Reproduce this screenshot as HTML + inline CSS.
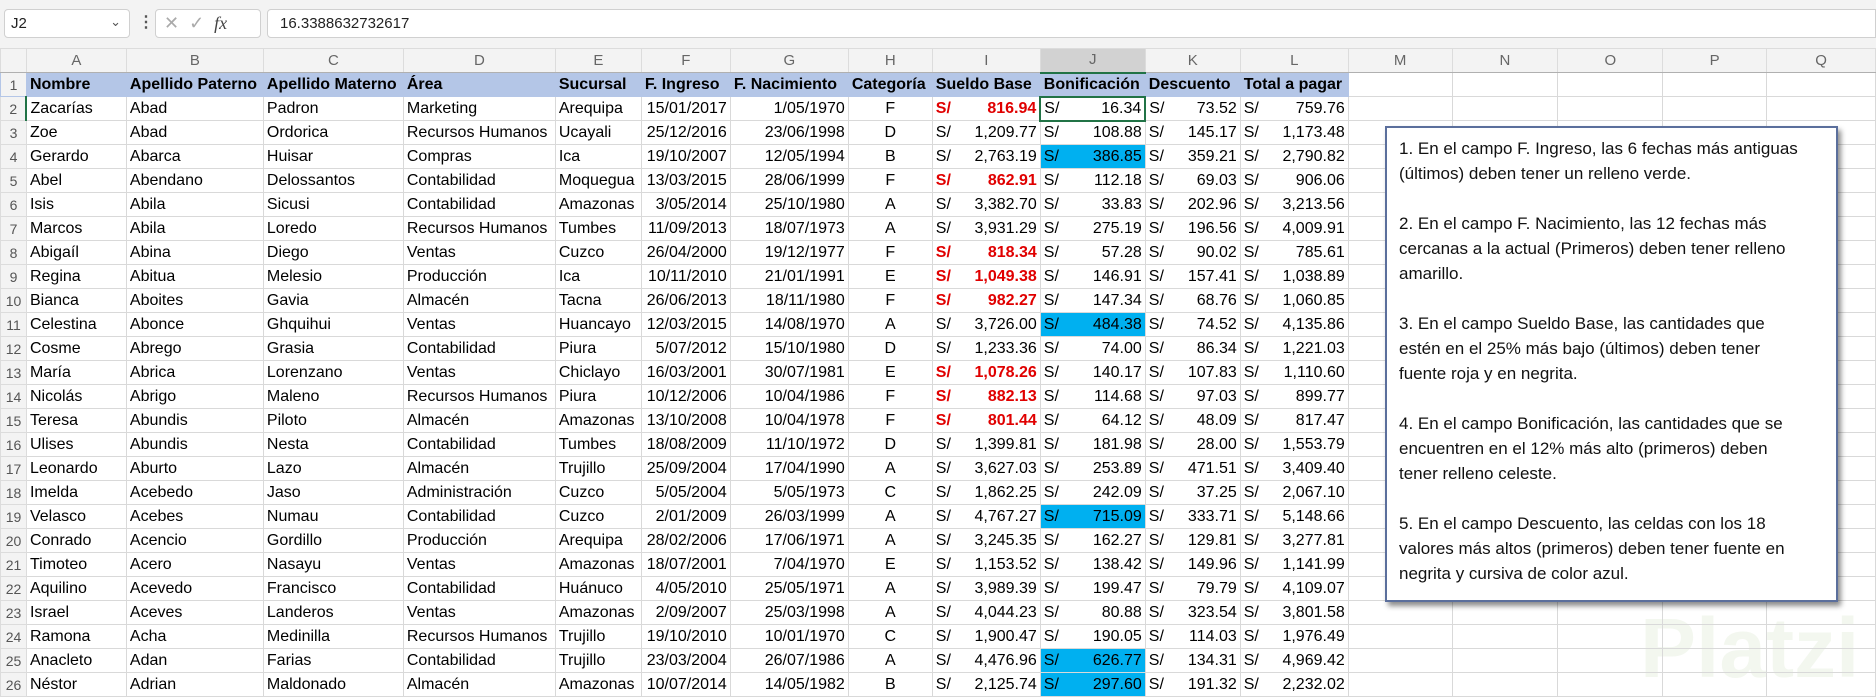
<!DOCTYPE html>
<html><head><meta charset="utf-8"><style>
*{box-sizing:border-box;margin:0;padding:0}
body{width:1876px;height:698px;overflow:hidden;background:#fff;font-family:"Liberation Sans",sans-serif;position:relative}
#top{position:absolute;left:0;top:0;width:1876px;height:48px;background:#f3f3f3}
#nb{position:absolute;left:4px;top:9px;width:126px;height:29px;background:#fff;border:1px solid #d0d0d0;border-radius:4px;font-size:15px;padding:5px 6px;color:#222}
#nb span{position:absolute;right:8px;top:4px;font-size:13px;color:#555}
#dots{position:absolute;left:138px;top:12px;font-size:16px;color:#555;font-weight:bold}
#fxb{position:absolute;left:155px;top:9px;width:106px;height:29px;background:#fff;border:1px solid #d0d0d0;border-radius:4px;color:#aaa;font-size:18px;padding:3px 8px;letter-spacing:10px}
#fxb i{font-family:"Liberation Serif",serif;color:#444;letter-spacing:0}
#fin{position:absolute;left:267px;top:9px;width:1609px;height:29px;background:#fff;border:1px solid #d0d0d0;border-radius:4px 0 0 4px;font-size:15px;padding:5px 12px;color:#222}
table{position:absolute;left:0;top:48px;border-collapse:collapse;table-layout:fixed;font-size:16px;color:#000}
td{height:24px;border:1px solid #d9d9d9;white-space:nowrap;overflow:hidden;padding:0 3px;line-height:22px}
tr.h td{background:#f3f3f3;color:#666;text-align:center;font-size:15px;border-color:#dcdcdc;border-bottom:1px solid #b0b0b0}
td.r{background:#f3f3f3;color:#555;text-align:center;font-size:14px;padding:0;border-color:#dcdcdc}
tr.t td{background:#b4c6e7;font-weight:bold;border-color:#b4c6e7}
tr.t td.r,tr.t td.e{background:#f3f3f3;font-weight:normal}
tr.t td.e{background:#fff;border-color:#d9d9d9}
.n{text-align:right}.c{text-align:center}
.m{display:flex;justify-content:space-between}
.red{color:#e00000;font-weight:bold}
.cy{background:#00b0f0}
#box{position:absolute;left:1385px;top:126px;width:453px;height:476px;background:#fff;border:2px solid #5b6f9c;box-shadow:3px 4px 5px rgba(0,0,0,.45);padding:8px 12px;font-size:17px;line-height:25px;color:#111}
#wm{position:absolute;left:1640px;top:600px;font-size:84px;color:rgba(200,220,180,.22);font-weight:bold}
</style></head><body>
<div id="top"><div id="nb">J2<span>⌄</span></div><div id="dots">⋮</div><div id="fxb">✕✓<i>fx</i></div><div id="fin">16.3388632732617</div></div>
<div id="wm">Platzi</div>
<table>
<colgroup><col style="width:26px"><col style="width:100px"><col style="width:137px"><col style="width:140px"><col style="width:152px"><col style="width:86px"><col style="width:89px"><col style="width:118px"><col style="width:84px"><col style="width:108px"><col style="width:105px"><col style="width:95px"><col style="width:108px"><col style="width:104px"><col style="width:106px"><col style="width:105px"><col style="width:104px"><col style="width:109px"></colgroup>
<tr class="h"><td></td><td>A</td><td>B</td><td>C</td><td>D</td><td>E</td><td>F</td><td>G</td><td>H</td><td>I</td><td style="background:#d2d2d2;border-bottom:2px solid #217346">J</td><td>K</td><td>L</td><td>M</td><td>N</td><td>O</td><td>P</td><td>Q</td></tr>
<tr class="t"><td class="r">1</td><td>Nombre</td><td>Apellido Paterno</td><td>Apellido Materno</td><td>Área</td><td>Sucursal</td><td>F. Ingreso</td><td>F. Nacimiento</td><td>Categoría</td><td>Sueldo Base</td><td>Bonificación</td><td>Descuento</td><td>Total a pagar</td><td class="e"></td><td class="e"></td><td class="e"></td><td class="e"></td><td class="e"></td></tr>
<tr><td class="r" style="border-right:2px solid #217346">2</td><td>Zacarías</td><td>Abad</td><td>Padron</td><td>Marketing</td><td>Arequipa</td><td class="n">15/01/2017</td><td class="n">1/05/1970</td><td class="c">F</td><td class="red"><div class="m"><span>S/</span><span>816.94</span></div></td><td style="border:2px solid #217346"><div class="m"><span>S/</span><span>16.34</span></div></td><td><div class="m"><span>S/</span><span>73.52</span></div></td><td><div class="m"><span>S/</span><span>759.76</span></div></td><td></td><td></td><td></td><td></td><td></td></tr>
<tr><td class="r">3</td><td>Zoe</td><td>Abad</td><td>Ordorica</td><td>Recursos Humanos</td><td>Ucayali</td><td class="n">25/12/2016</td><td class="n">23/06/1998</td><td class="c">D</td><td><div class="m"><span>S/</span><span>1,209.77</span></div></td><td><div class="m"><span>S/</span><span>108.88</span></div></td><td><div class="m"><span>S/</span><span>145.17</span></div></td><td><div class="m"><span>S/</span><span>1,173.48</span></div></td><td></td><td></td><td></td><td></td><td></td></tr>
<tr><td class="r">4</td><td>Gerardo</td><td>Abarca</td><td>Huisar</td><td>Compras</td><td>Ica</td><td class="n">19/10/2007</td><td class="n">12/05/1994</td><td class="c">B</td><td><div class="m"><span>S/</span><span>2,763.19</span></div></td><td class="cy"><div class="m"><span>S/</span><span>386.85</span></div></td><td><div class="m"><span>S/</span><span>359.21</span></div></td><td><div class="m"><span>S/</span><span>2,790.82</span></div></td><td></td><td></td><td></td><td></td><td></td></tr>
<tr><td class="r">5</td><td>Abel</td><td>Abendano</td><td>Delossantos</td><td>Contabilidad</td><td>Moquegua</td><td class="n">13/03/2015</td><td class="n">28/06/1999</td><td class="c">F</td><td class="red"><div class="m"><span>S/</span><span>862.91</span></div></td><td><div class="m"><span>S/</span><span>112.18</span></div></td><td><div class="m"><span>S/</span><span>69.03</span></div></td><td><div class="m"><span>S/</span><span>906.06</span></div></td><td></td><td></td><td></td><td></td><td></td></tr>
<tr><td class="r">6</td><td>Isis</td><td>Abila</td><td>Sicusi</td><td>Contabilidad</td><td>Amazonas</td><td class="n">3/05/2014</td><td class="n">25/10/1980</td><td class="c">A</td><td><div class="m"><span>S/</span><span>3,382.70</span></div></td><td><div class="m"><span>S/</span><span>33.83</span></div></td><td><div class="m"><span>S/</span><span>202.96</span></div></td><td><div class="m"><span>S/</span><span>3,213.56</span></div></td><td></td><td></td><td></td><td></td><td></td></tr>
<tr><td class="r">7</td><td>Marcos</td><td>Abila</td><td>Loredo</td><td>Recursos Humanos</td><td>Tumbes</td><td class="n">11/09/2013</td><td class="n">18/07/1973</td><td class="c">A</td><td><div class="m"><span>S/</span><span>3,931.29</span></div></td><td><div class="m"><span>S/</span><span>275.19</span></div></td><td><div class="m"><span>S/</span><span>196.56</span></div></td><td><div class="m"><span>S/</span><span>4,009.91</span></div></td><td></td><td></td><td></td><td></td><td></td></tr>
<tr><td class="r">8</td><td>Abigaíl</td><td>Abina</td><td>Diego</td><td>Ventas</td><td>Cuzco</td><td class="n">26/04/2000</td><td class="n">19/12/1977</td><td class="c">F</td><td class="red"><div class="m"><span>S/</span><span>818.34</span></div></td><td><div class="m"><span>S/</span><span>57.28</span></div></td><td><div class="m"><span>S/</span><span>90.02</span></div></td><td><div class="m"><span>S/</span><span>785.61</span></div></td><td></td><td></td><td></td><td></td><td></td></tr>
<tr><td class="r">9</td><td>Regina</td><td>Abitua</td><td>Melesio</td><td>Producción</td><td>Ica</td><td class="n">10/11/2010</td><td class="n">21/01/1991</td><td class="c">E</td><td class="red"><div class="m"><span>S/</span><span>1,049.38</span></div></td><td><div class="m"><span>S/</span><span>146.91</span></div></td><td><div class="m"><span>S/</span><span>157.41</span></div></td><td><div class="m"><span>S/</span><span>1,038.89</span></div></td><td></td><td></td><td></td><td></td><td></td></tr>
<tr><td class="r">10</td><td>Bianca</td><td>Aboites</td><td>Gavia</td><td>Almacén</td><td>Tacna</td><td class="n">26/06/2013</td><td class="n">18/11/1980</td><td class="c">F</td><td class="red"><div class="m"><span>S/</span><span>982.27</span></div></td><td><div class="m"><span>S/</span><span>147.34</span></div></td><td><div class="m"><span>S/</span><span>68.76</span></div></td><td><div class="m"><span>S/</span><span>1,060.85</span></div></td><td></td><td></td><td></td><td></td><td></td></tr>
<tr><td class="r">11</td><td>Celestina</td><td>Abonce</td><td>Ghquihui</td><td>Ventas</td><td>Huancayo</td><td class="n">12/03/2015</td><td class="n">14/08/1970</td><td class="c">A</td><td><div class="m"><span>S/</span><span>3,726.00</span></div></td><td class="cy"><div class="m"><span>S/</span><span>484.38</span></div></td><td><div class="m"><span>S/</span><span>74.52</span></div></td><td><div class="m"><span>S/</span><span>4,135.86</span></div></td><td></td><td></td><td></td><td></td><td></td></tr>
<tr><td class="r">12</td><td>Cosme</td><td>Abrego</td><td>Grasia</td><td>Contabilidad</td><td>Piura</td><td class="n">5/07/2012</td><td class="n">15/10/1980</td><td class="c">D</td><td><div class="m"><span>S/</span><span>1,233.36</span></div></td><td><div class="m"><span>S/</span><span>74.00</span></div></td><td><div class="m"><span>S/</span><span>86.34</span></div></td><td><div class="m"><span>S/</span><span>1,221.03</span></div></td><td></td><td></td><td></td><td></td><td></td></tr>
<tr><td class="r">13</td><td>María</td><td>Abrica</td><td>Lorenzano</td><td>Ventas</td><td>Chiclayo</td><td class="n">16/03/2001</td><td class="n">30/07/1981</td><td class="c">E</td><td class="red"><div class="m"><span>S/</span><span>1,078.26</span></div></td><td><div class="m"><span>S/</span><span>140.17</span></div></td><td><div class="m"><span>S/</span><span>107.83</span></div></td><td><div class="m"><span>S/</span><span>1,110.60</span></div></td><td></td><td></td><td></td><td></td><td></td></tr>
<tr><td class="r">14</td><td>Nicolás</td><td>Abrigo</td><td>Maleno</td><td>Recursos Humanos</td><td>Piura</td><td class="n">10/12/2006</td><td class="n">10/04/1986</td><td class="c">F</td><td class="red"><div class="m"><span>S/</span><span>882.13</span></div></td><td><div class="m"><span>S/</span><span>114.68</span></div></td><td><div class="m"><span>S/</span><span>97.03</span></div></td><td><div class="m"><span>S/</span><span>899.77</span></div></td><td></td><td></td><td></td><td></td><td></td></tr>
<tr><td class="r">15</td><td>Teresa</td><td>Abundis</td><td>Piloto</td><td>Almacén</td><td>Amazonas</td><td class="n">13/10/2008</td><td class="n">10/04/1978</td><td class="c">F</td><td class="red"><div class="m"><span>S/</span><span>801.44</span></div></td><td><div class="m"><span>S/</span><span>64.12</span></div></td><td><div class="m"><span>S/</span><span>48.09</span></div></td><td><div class="m"><span>S/</span><span>817.47</span></div></td><td></td><td></td><td></td><td></td><td></td></tr>
<tr><td class="r">16</td><td>Ulises</td><td>Abundis</td><td>Nesta</td><td>Contabilidad</td><td>Tumbes</td><td class="n">18/08/2009</td><td class="n">11/10/1972</td><td class="c">D</td><td><div class="m"><span>S/</span><span>1,399.81</span></div></td><td><div class="m"><span>S/</span><span>181.98</span></div></td><td><div class="m"><span>S/</span><span>28.00</span></div></td><td><div class="m"><span>S/</span><span>1,553.79</span></div></td><td></td><td></td><td></td><td></td><td></td></tr>
<tr><td class="r">17</td><td>Leonardo</td><td>Aburto</td><td>Lazo</td><td>Almacén</td><td>Trujillo</td><td class="n">25/09/2004</td><td class="n">17/04/1990</td><td class="c">A</td><td><div class="m"><span>S/</span><span>3,627.03</span></div></td><td><div class="m"><span>S/</span><span>253.89</span></div></td><td><div class="m"><span>S/</span><span>471.51</span></div></td><td><div class="m"><span>S/</span><span>3,409.40</span></div></td><td></td><td></td><td></td><td></td><td></td></tr>
<tr><td class="r">18</td><td>Imelda</td><td>Acebedo</td><td>Jaso</td><td>Administración</td><td>Cuzco</td><td class="n">5/05/2004</td><td class="n">5/05/1973</td><td class="c">C</td><td><div class="m"><span>S/</span><span>1,862.25</span></div></td><td><div class="m"><span>S/</span><span>242.09</span></div></td><td><div class="m"><span>S/</span><span>37.25</span></div></td><td><div class="m"><span>S/</span><span>2,067.10</span></div></td><td></td><td></td><td></td><td></td><td></td></tr>
<tr><td class="r">19</td><td>Velasco</td><td>Acebes</td><td>Numau</td><td>Contabilidad</td><td>Cuzco</td><td class="n">2/01/2009</td><td class="n">26/03/1999</td><td class="c">A</td><td><div class="m"><span>S/</span><span>4,767.27</span></div></td><td class="cy"><div class="m"><span>S/</span><span>715.09</span></div></td><td><div class="m"><span>S/</span><span>333.71</span></div></td><td><div class="m"><span>S/</span><span>5,148.66</span></div></td><td></td><td></td><td></td><td></td><td></td></tr>
<tr><td class="r">20</td><td>Conrado</td><td>Acencio</td><td>Gordillo</td><td>Producción</td><td>Arequipa</td><td class="n">28/02/2006</td><td class="n">17/06/1971</td><td class="c">A</td><td><div class="m"><span>S/</span><span>3,245.35</span></div></td><td><div class="m"><span>S/</span><span>162.27</span></div></td><td><div class="m"><span>S/</span><span>129.81</span></div></td><td><div class="m"><span>S/</span><span>3,277.81</span></div></td><td></td><td></td><td></td><td></td><td></td></tr>
<tr><td class="r">21</td><td>Timoteo</td><td>Acero</td><td>Nasayu</td><td>Ventas</td><td>Amazonas</td><td class="n">18/07/2001</td><td class="n">7/04/1970</td><td class="c">E</td><td><div class="m"><span>S/</span><span>1,153.52</span></div></td><td><div class="m"><span>S/</span><span>138.42</span></div></td><td><div class="m"><span>S/</span><span>149.96</span></div></td><td><div class="m"><span>S/</span><span>1,141.99</span></div></td><td></td><td></td><td></td><td></td><td></td></tr>
<tr><td class="r">22</td><td>Aquilino</td><td>Acevedo</td><td>Francisco</td><td>Contabilidad</td><td>Huánuco</td><td class="n">4/05/2010</td><td class="n">25/05/1971</td><td class="c">A</td><td><div class="m"><span>S/</span><span>3,989.39</span></div></td><td><div class="m"><span>S/</span><span>199.47</span></div></td><td><div class="m"><span>S/</span><span>79.79</span></div></td><td><div class="m"><span>S/</span><span>4,109.07</span></div></td><td></td><td></td><td></td><td></td><td></td></tr>
<tr><td class="r">23</td><td>Israel</td><td>Aceves</td><td>Landeros</td><td>Ventas</td><td>Amazonas</td><td class="n">2/09/2007</td><td class="n">25/03/1998</td><td class="c">A</td><td><div class="m"><span>S/</span><span>4,044.23</span></div></td><td><div class="m"><span>S/</span><span>80.88</span></div></td><td><div class="m"><span>S/</span><span>323.54</span></div></td><td><div class="m"><span>S/</span><span>3,801.58</span></div></td><td></td><td></td><td></td><td></td><td></td></tr>
<tr><td class="r">24</td><td>Ramona</td><td>Acha</td><td>Medinilla</td><td>Recursos Humanos</td><td>Trujillo</td><td class="n">19/10/2010</td><td class="n">10/01/1970</td><td class="c">C</td><td><div class="m"><span>S/</span><span>1,900.47</span></div></td><td><div class="m"><span>S/</span><span>190.05</span></div></td><td><div class="m"><span>S/</span><span>114.03</span></div></td><td><div class="m"><span>S/</span><span>1,976.49</span></div></td><td></td><td></td><td></td><td></td><td></td></tr>
<tr><td class="r">25</td><td>Anacleto</td><td>Adan</td><td>Farias</td><td>Contabilidad</td><td>Trujillo</td><td class="n">23/03/2004</td><td class="n">26/07/1986</td><td class="c">A</td><td><div class="m"><span>S/</span><span>4,476.96</span></div></td><td class="cy"><div class="m"><span>S/</span><span>626.77</span></div></td><td><div class="m"><span>S/</span><span>134.31</span></div></td><td><div class="m"><span>S/</span><span>4,969.42</span></div></td><td></td><td></td><td></td><td></td><td></td></tr>
<tr><td class="r">26</td><td>Néstor</td><td>Adrian</td><td>Maldonado</td><td>Almacén</td><td>Amazonas</td><td class="n">10/07/2014</td><td class="n">14/05/1982</td><td class="c">B</td><td><div class="m"><span>S/</span><span>2,125.74</span></div></td><td class="cy"><div class="m"><span>S/</span><span>297.60</span></div></td><td><div class="m"><span>S/</span><span>191.32</span></div></td><td><div class="m"><span>S/</span><span>2,232.02</span></div></td><td></td><td></td><td></td><td></td><td></td></tr>
</table>
<div id="box">1. En el campo F. Ingreso, las 6 fechas más antiguas<br>(últimos) deben tener un relleno verde.<br><br>2. En el campo F. Nacimiento, las 12 fechas más<br>cercanas a la actual (Primeros) deben tener relleno<br>amarillo.<br><br>3. En el campo Sueldo Base, las cantidades que<br>estén en el 25% más bajo (últimos) deben tener<br>fuente roja y en negrita.<br><br>4. En el campo Bonificación, las cantidades que se<br>encuentren en el 12% más alto (primeros) deben<br>tener relleno celeste.<br><br>5. En el campo Descuento, las celdas con los 18<br>valores más altos (primeros) deben tener fuente en<br>negrita y cursiva de color azul.</div>
</body></html>
